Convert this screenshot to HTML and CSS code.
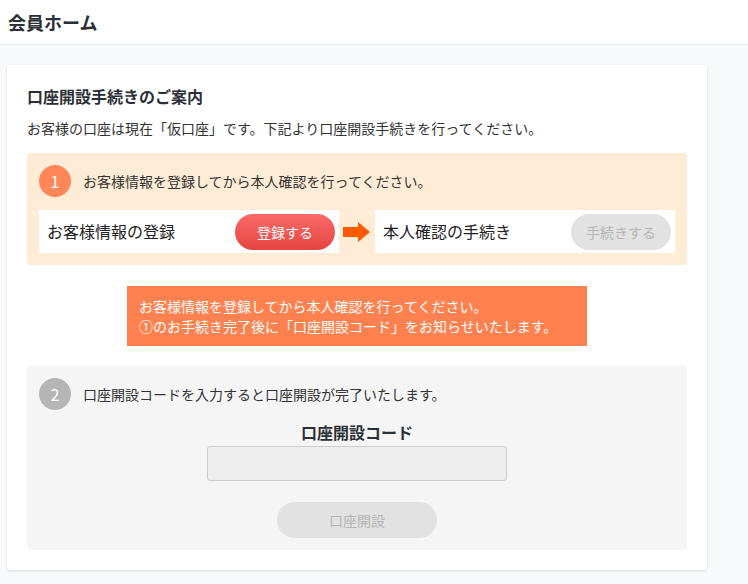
FILE: index.html
```html
<!DOCTYPE html>
<html lang="ja">
<head>
<meta charset="utf-8">
<title>会員ホーム</title>
<link rel="stylesheet" href="styles.css">
</head>
<body>
<header class="topbar">
  <h1 class="page-title">会員ホーム</h1>
</header>
<main class="main">
  <section class="card">
    <h2 class="card-title">口座開設手続きのご案内</h2>
    <p class="card-lead">お客様の口座は現在「仮口座」です。下記より口座開設手続きを行ってください。</p>

    <div class="step step-one">
      <div class="step-head">
        <span class="step-num num-orange">1</span>
        <span class="step-text">お客様情報を登録してから本人確認を行ってください。</span>
      </div>
      <div class="step-row">
        <div class="task">
          <span class="task-label">お客様情報の登録</span>
          <button class="btn btn-red">登録する</button>
        </div>
        <div class="arrow">
          <svg width="28" height="20" viewBox="0 0 28 20"><path d="M0 5H15V0L27 10L15 20V15H0Z" fill="#ff5a00"/></svg>
        </div>
        <div class="task">
          <span class="task-label">本人確認の手続き</span>
          <button class="btn btn-grey">手続きする</button>
        </div>
      </div>
    </div>

    <div class="notice">
      <p>お客様情報を登録してから本人確認を行ってください。</p>
      <p>①のお手続き完了後に「口座開設コード」をお知らせいたします。</p>
    </div>

    <div class="step step-two">
      <div class="step-head">
        <span class="step-num num-grey">2</span>
        <span class="step-text">口座開設コードを入力すると口座開設が完了いたします。</span>
      </div>
      <div class="code-form">
        <label class="code-label">口座開設コード</label>
        <input class="code-input" type="text" disabled>
        <button class="btn btn-grey btn-wide">口座開設</button>
      </div>
    </div>
  </section>
</main>
</body>
</html>
```

FILE: styles.css
```css
* { box-sizing: border-box; }
html, body { margin: 0; padding: 0; }
body {
  background: #f8f9fa;
  font-family: "Noto Sans CJK JP", "Noto Sans", sans-serif;
  color: #333;
  width: 748px;
  height: 584px;
  overflow: hidden;
}
.topbar {
  background: #fff;
  height: 45px;
  border-bottom: 1px solid #e6e7e9;
  padding: 0 8px 1px;
  display: flex;
  align-items: center;
}
.page-title {
  margin: 0;
  font-size: 18px;
  font-weight: bold;
  line-height: 24px;
  color: #2b2f36;
}
.main {
  padding: 20px 0 0 7px;
}
.card {
  width: 700px;
  background: #fff;
  border-radius: 3px;
  box-shadow: 0 1px 3px rgba(0,0,0,0.12);
  padding: 19px 20px 20px 20px;
}
.card-title {
  margin: 0;
  font-size: 16px;
  line-height: 24px;
  font-weight: bold;
  color: #2b2f36;
}
.card-lead {
  margin: 10px 0 0;
  font-size: 14px;
  line-height: 20px;
}
.step {
  border-radius: 3px;
  padding: 12px;
}
.step-one {
  margin-top: 15px;
  background: #feecd6;
}
.step-head {
  display: flex;
  align-items: center;
  gap: 12px;
  height: 32px;
}
.step-num {
  width: 32px;
  height: 32px;
  border-radius: 50%;
  color: #fff;
  font-size: 16px;
  display: flex;
  align-items: center;
  justify-content: center;
  flex: none;
}
.num-orange { background: #ff8656; }
.num-grey { background: #b5b5b5; }
.step-text {
  font-size: 14px;
  line-height: 20px;
}
.step-row {
  margin-top: 13px;
  display: flex;
  align-items: center;
}
.task {
  width: 300px;
  height: 43px;
  background: #fff;
  display: flex;
  align-items: center;
  justify-content: space-between;
  padding: 0 4px 0 8px;
}
.task-label {
  font-size: 16px;
  line-height: 24px;
  color: #222;
  margin-top: -2px;
}
.arrow {
  width: 36px;
  display: flex;
  justify-content: center;
}
.btn {
  border: none;
  width: 100px;
  height: 36px;
  border-radius: 18px;
  font-family: inherit;
  font-size: 14px;
  padding: 0;
}
.btn-red {
  background: linear-gradient(#fb6a69, #e4453f);
  color: #fff;
}
.btn-grey {
  background: #e2e2e2;
  color: #b4b4b4;
}
.notice {
  width: 460px;
  margin: 21px auto 0;
  background: #ff8150;
  color: #fff;
  padding: 10px 12px;
  font-size: 14px;
  line-height: 20px;
}
.notice p { margin: 0; }
.step-two {
  margin-top: 20px;
  background: #f5f5f5;
}
.code-form {
  margin-top: 10px;
  display: flex;
  flex-direction: column;
  align-items: center;
}
.code-label {
  font-size: 16px;
  line-height: 24px;
  font-weight: bold;
  color: #2b2f36;
}
.code-input {
  margin-top: 2px;
  width: 300px;
  height: 35px;
  background: #eeeeee;
  border: 1px solid #cccccc;
  border-radius: 3px;
}
.btn-wide {
  width: 160px;
  margin-top: 21px;
}
```
